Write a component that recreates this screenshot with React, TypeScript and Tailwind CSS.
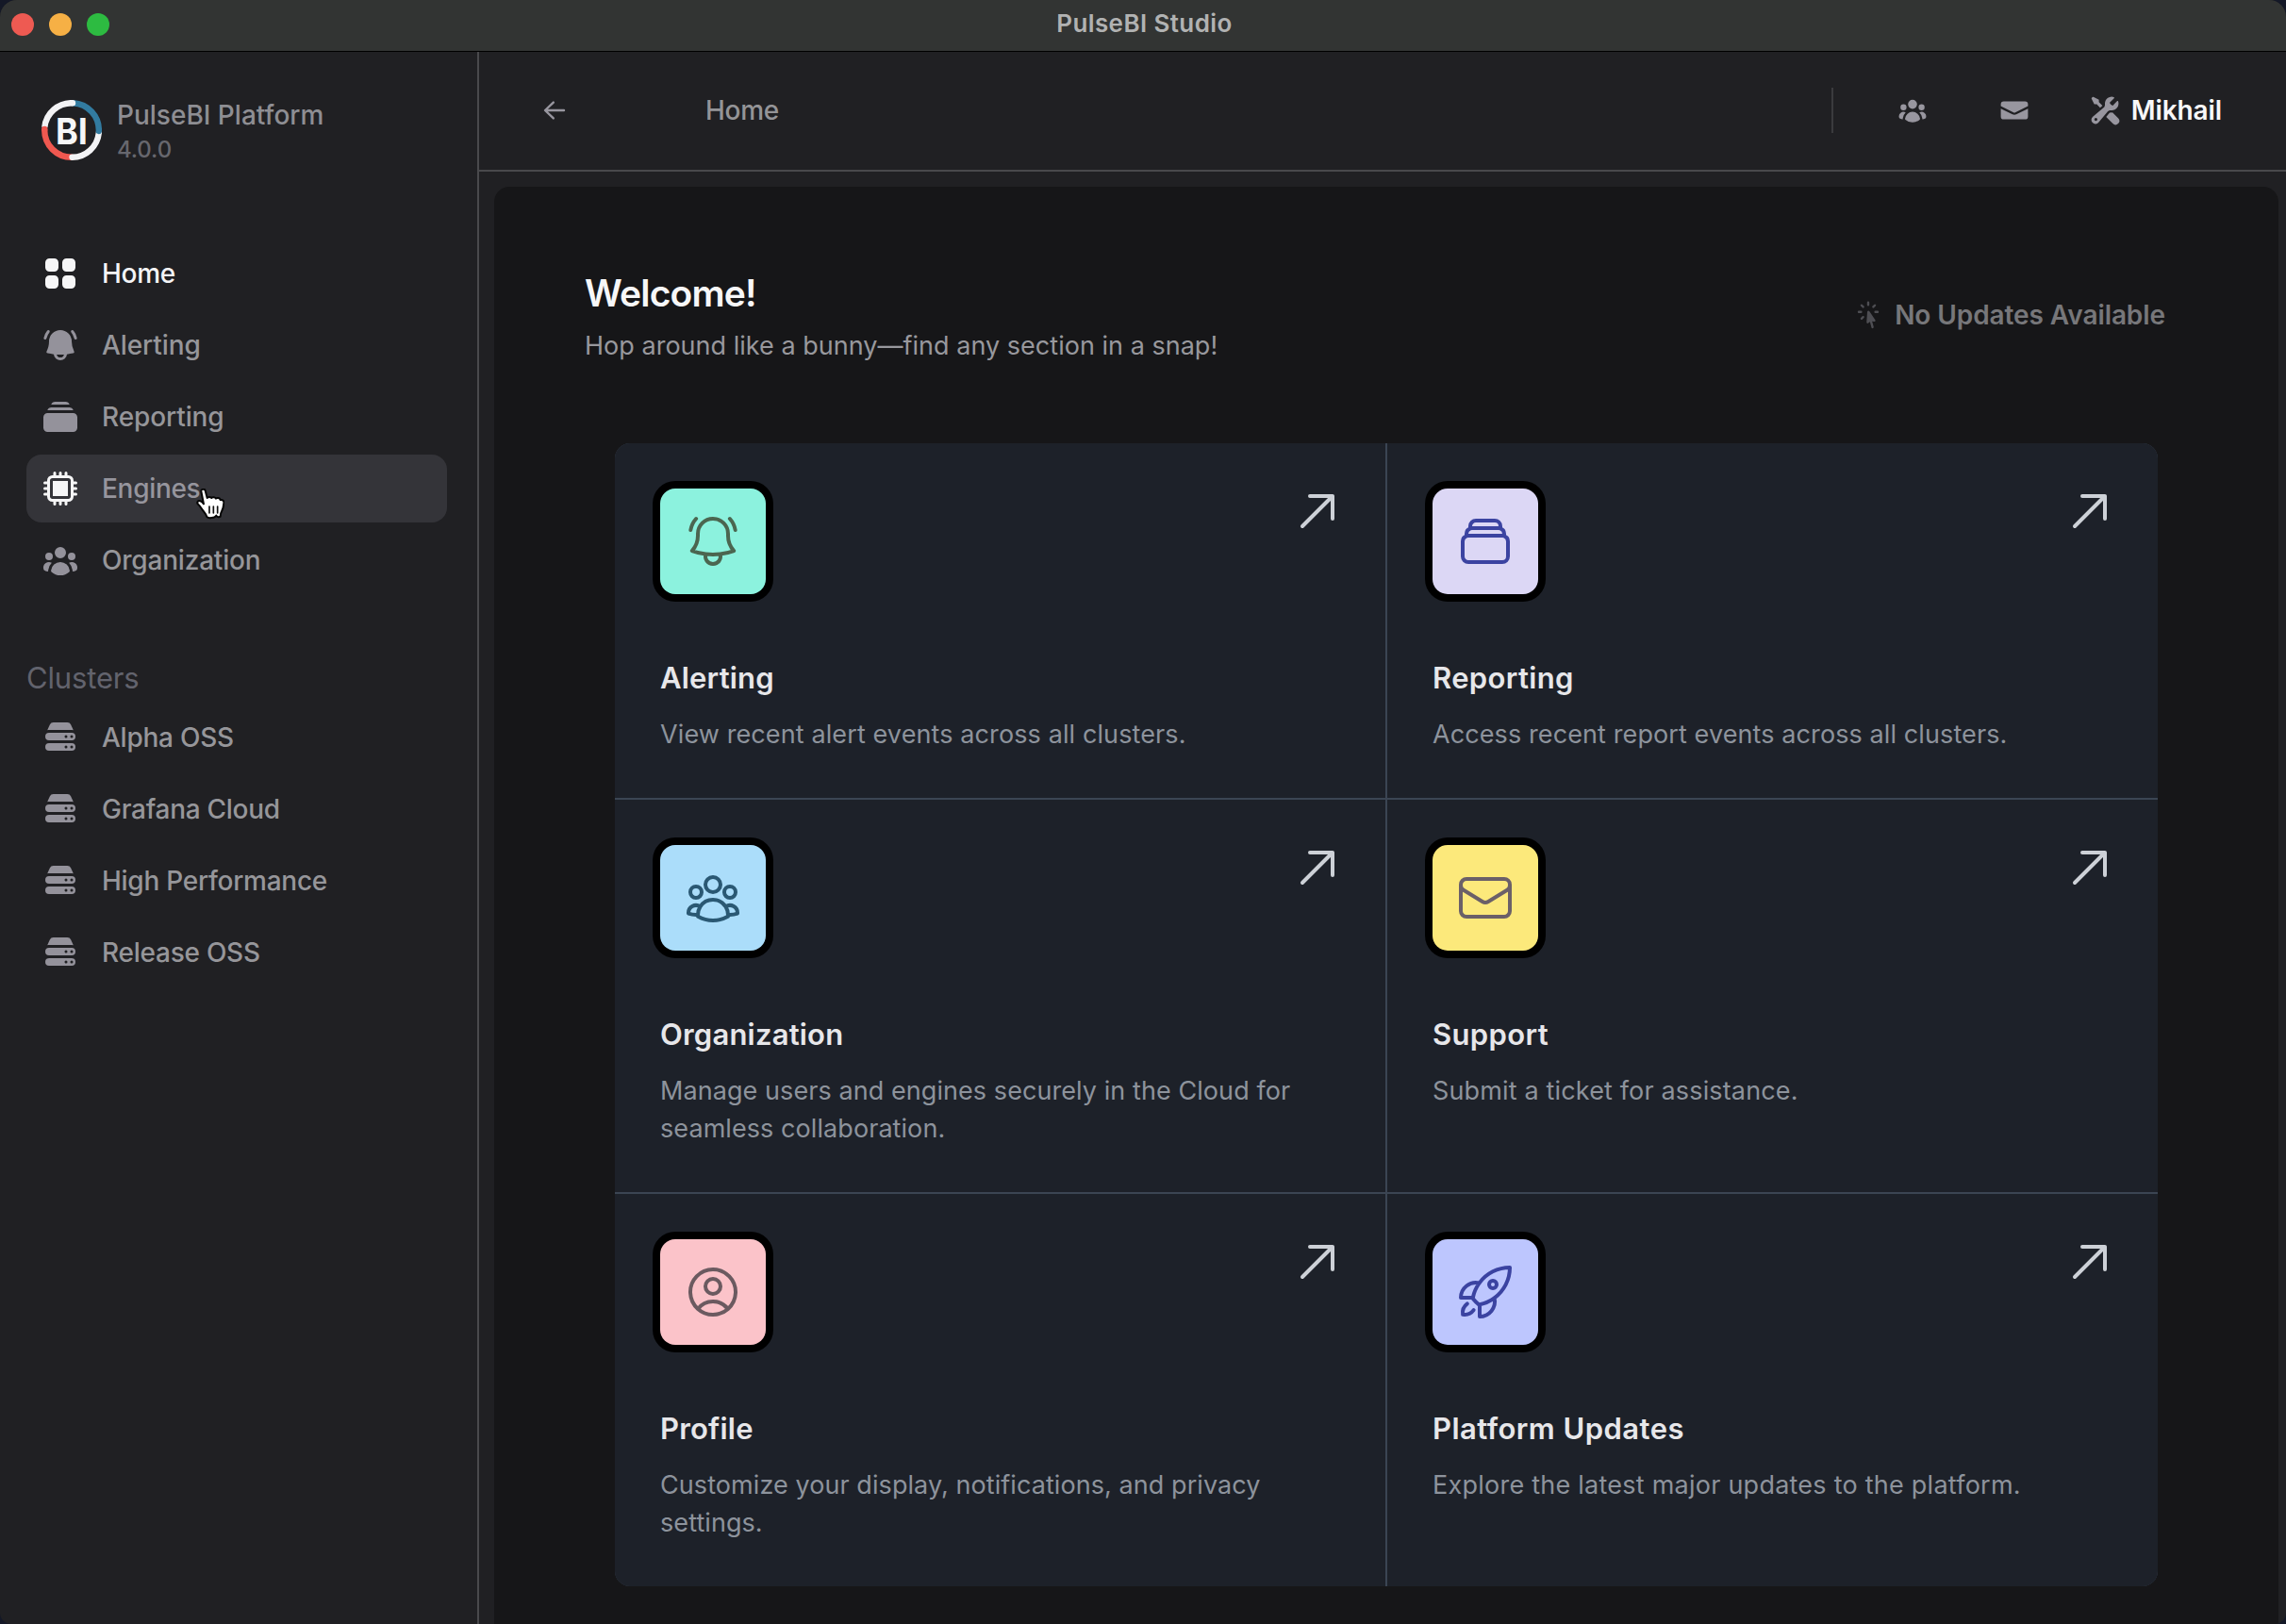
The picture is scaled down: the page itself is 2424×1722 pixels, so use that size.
import type { ReactNode } from "react";
import type { IconType } from "react-icons";
import {
  HiMiniArrowLeft,
  HiMiniBellAlert,
  HiMiniCpuChip,
  HiMiniCursorArrowRays,
  HiMiniEnvelope,
  HiMiniRectangleStack,
  HiMiniServerStack,
  HiMiniSquares2X2,
  HiMiniUserGroup,
  HiMiniWrenchScrewdriver,
  HiOutlineBellAlert,
  HiOutlineEnvelope,
  HiOutlineRectangleStack,
  HiOutlineRocketLaunch,
  HiOutlineUserCircle,
  HiOutlineUserGroup,
} from "react-icons/hi2";

type NavEntry = { label: string; icon: IconType; state?: "active" | "hover"; tracking?: string };

const sections: NavEntry[] = [
  { label: "Home", icon: HiMiniSquares2X2, state: "active", tracking: "tracking-[-0.3px]" },
  { label: "Alerting", icon: HiMiniBellAlert, tracking: "tracking-[-0.1px]" },
  { label: "Reporting", icon: HiMiniRectangleStack, tracking: "tracking-[-0.1px]" },
  { label: "Engines", icon: HiMiniCpuChip, state: "hover", tracking: "tracking-[-0.3px]" },
  { label: "Organization", icon: HiMiniUserGroup },
];

const clusters: NavEntry[] = [
  { label: "Alpha OSS", icon: HiMiniServerStack, tracking: "tracking-[-0.25px]" },
  { label: "Grafana Cloud", icon: HiMiniServerStack, tracking: "tracking-[-0.28px]" },
  { label: "High Performance", icon: HiMiniServerStack, tracking: "tracking-[-0.27px]" },
  { label: "Release OSS", icon: HiMiniServerStack, tracking: "tracking-[-0.25px]" },
];

type Card = { title: string; text: string; icon: IconType; tile: string; tracking?: string; textTracking?: string };

const cards: Card[] = [
  {
    title: "Alerting",
    text: "View recent alert events across all clusters.",
    icon: HiOutlineBellAlert,
    tile: "bg-[#8cf2de] text-[#4b6650]",
    textTracking: "tracking-[0.11px]",
  },
  {
    title: "Reporting",
    text: "Access recent report events across all clusters.",
    icon: HiOutlineRectangleStack,
    tile: "bg-[#dcd7f5] text-[#3b43a1]",
    tracking: "tracking-[0.35px]",
    textTracking: "tracking-[0.1px]",
  },
  {
    title: "Organization",
    text: "Manage users and engines securely in the Cloud for seamless collaboration.",
    icon: HiOutlineUserGroup,
    tile: "bg-[#abddfa] text-[#2a5873]",
  },
  {
    title: "Support",
    text: "Submit a ticket for assistance.",
    icon: HiOutlineEnvelope,
    tile: "bg-[#fce97b] text-[#6b6068]",
    tracking: "tracking-[0.35px]",
    textTracking: "tracking-[0.15px]",
  },
  {
    title: "Profile",
    text: "Customize your display, notifications, and privacy settings.",
    icon: HiOutlineUserCircle,
    tile: "bg-[#fbc3c9] text-[#6b5a60]",
  },
  {
    title: "Platform Updates",
    text: "Explore the latest major updates to the platform.",
    icon: HiOutlineRocketLaunch,
    tile: "bg-[#bdc6fe] text-[#3b43a1]",
    tracking: "tracking-[0.45px]",
    textTracking: "tracking-[0.24px]",
  },
];

function TitleBar() {
  return (
    <div className="relative flex h-[55px] shrink-0 items-center justify-center border-b border-black bg-[#323433] pb-1 pl-[3px]">
      <div className="absolute top-[14px] left-3 flex gap-4">
        <span className="size-6 rounded-full bg-[#ee5a52]" />
        <span className="size-6 rounded-full bg-[#f6b045]" />
        <span className="size-6 rounded-full bg-[#2dbb41]" />
      </div>
      <span className="text-[26px] leading-8 font-semibold tracking-[0.4px] text-[#b1b2b2]">PulseBI Studio</span>
    </div>
  );
}

function Logo() {
  return (
    <svg viewBox="0 0 64 64" className="size-16 shrink-0" fill="none" strokeWidth="6.4" strokeLinecap="round">
      <path d="M32 60.8A28.8 28.8 0 0 1 3.2 32" stroke="#ef5850" />
      <path d="M60.8 35A28.8 28.8 0 0 1 32.5 60.8" stroke="#f3f3f5" />
      <path d="M33.5 3.2A28.8 28.8 0 0 1 60.8 33" stroke="#327ba0" />
      <path d="M3.3 29A28.8 28.8 0 0 1 33 3.2" stroke="#f3f3f5" strokeLinecap="butt" />
      <circle cx="33" cy="3.2" r="3.2" fill="#f3f3f5" />
      <circle cx="3.3" cy="31" r="3.2" fill="#ef5850" />
      <text
        x="15"
        y="47"
        textLength="34"
        lengthAdjust="spacingAndGlyphs"
        fill="#f6f6f7"
        className="font-['Inter',sans-serif] text-[38px] font-bold"
      >
        BI
      </text>
    </svg>
  );
}

function HandCursor() {
  return (
    <svg viewBox="0 0 93 102" className="absolute top-[36px] left-[179px] h-[34px] w-[31px]" aria-hidden="true">
      <path
        d="M19 9c-1-7 11-10 13-2l6 23c2-4 12-4 14 0 3-4 12-3 14 2 4-4 13-2 14 4 8-1 12 3 11 10-1 12-2 19-7 27-3 5-4 9-4 16-4 3-10 2-13-3-3 6-9 7-15 7-6 1-12 0-15-3-2-8-9-15-14-22-5-7-8-13-13-17-7-6-1-14 6-11 4 1 7 4 11 9z"
        fill="#fff"
        stroke="#050505"
        strokeWidth="6"
        strokeLinejoin="round"
      />
      <path d="M45 57v21M58 57v21M71 57v21" stroke="#111" strokeWidth="5" strokeLinecap="round" />
    </svg>
  );
}

function NavItem({ label, icon: Icon, state, tracking = "tracking-[-0.2px]" }: NavEntry) {
  const tone =
    state === "active" ? "text-[#f4f4f6]" : state === "hover" ? "bg-[#343439] text-[#96959d]" : "text-[#96969a]";
  const iconTone = state ? "text-[#f6f6f7]" : "text-[#94929b]";
  return (
    <div className={`relative flex h-[72px] items-center gap-6 rounded-2xl px-4 ${tone}`}>
      <Icon className={`size-10 shrink-0 ${iconTone}`} />
      <span className={`text-[28px] leading-10 font-medium ${tracking}`}>{label}</span>
      {state === "hover" && <HandCursor />}
    </div>
  );
}

function Sidebar() {
  return (
    <aside className="flex w-[508px] shrink-0 flex-col border-r-2 border-[#49494c] pr-8 pl-7">
      <div className="mt-[51px] ml-4 flex h-16 items-center gap-4">
        <Logo />
        <div className="flex flex-col">
          <span className="text-[28px] leading-10 font-medium text-[#8e8e93]">PulseBI Platform</span>
          <span className="pt-px text-[24px] leading-8 font-medium tracking-[-0.1px] text-[#67676e]">4.0.0</span>
        </div>
      </div>
      <nav className="mt-[84px] flex flex-col gap-1">
        {sections.map((entry) => (
          <NavItem key={entry.label} {...entry} />
        ))}
      </nav>
      <h2 className="mt-16 text-[31px] leading-[50px] tracking-[-0.16px] text-[#62636d]">Clusters</h2>
      <nav className="mt-[2px] flex flex-col gap-1">
        {clusters.map((entry) => (
          <NavItem key={entry.label} {...entry} />
        ))}
      </nav>
    </aside>
  );
}

function HeaderBar() {
  return (
    <header className="flex h-[127px] shrink-0 items-center border-b-2 border-[#49494c] pr-[68px] pb-px pl-16 text-[#98969f]">
      <HiMiniArrowLeft className="size-8" />
      <span className="ml-36 text-[28px] leading-10 font-medium tracking-[-0.3px] text-[#949497]">Home</span>
      <div className="ml-auto flex items-center">
        <span className="mr-[68px] h-12 w-[2px] bg-[#3b3b3e]" />
        <HiMiniUserGroup className="mr-[76px] size-8" />
        <HiMiniEnvelope className="mr-16 size-8" />
        <HiMiniWrenchScrewdriver className="mr-3 size-8" />
        <span className="text-[28px] leading-10 font-semibold tracking-[-0.12px] text-[#f8f8f9]">Mikhail</span>
      </div>
    </header>
  );
}

function OpenArrow() {
  return (
    <svg viewBox="0 0 24 24" className="size-12 text-[#cdd1d7]" fill="none" stroke="currentColor" strokeWidth="2">
      <path d="M4 20 20 4M8 4h12v12" strokeLinecap="round" strokeLinejoin="round" />
    </svg>
  );
}

function ActionCard({ title, text, icon: Icon, tile, tracking = "tracking-[0.2px]", textTracking = "tracking-[0.07px]" }: Card) {
  return (
    <article className="bg-[#1d2129] px-12 pt-12 pb-[47px]">
      <div className="flex items-start justify-between">
        <span className={`rounded-2xl p-6 ring-8 ring-black ${tile}`}>
          <Icon className="size-16" />
        </span>
        <OpenArrow />
      </div>
      <h3 className={`mt-[65px] text-[31px] leading-[48px] font-semibold text-[#e7e7ea] ${tracking}`}>{title}</h3>
      <p className={`mt-4 text-[27px] leading-10 text-[#8d939c] ${textTracking}`}>{text}</p>
    </article>
  );
}

function Panel({ children }: { children: ReactNode }) {
  return (
    <main className="mt-4 mr-2 ml-4 flex-1 overflow-hidden rounded-t-2xl bg-[#161618] pr-[120px] pl-24">{children}</main>
  );
}

export default function App() {
  return (
    <div className="h-[1722px] w-[2424px] bg-[#141827]">
      <div className="flex h-full flex-col overflow-hidden rounded-t-[18px] rounded-b-[12px] bg-[#202023] font-['Inter','Liberation_Sans',sans-serif]">
        <TitleBar />
        <div className="flex min-h-0 flex-1">
          <Sidebar />
          <div className="flex min-w-0 flex-1 flex-col">
            <HeaderBar />
            <Panel>
              <div className="mt-[85px] flex items-center justify-between">
                <div>
                  <h1 className="text-[39px] leading-[56px] font-semibold tracking-[-0.82px] text-[#f7f7f8]">Welcome!</h1>
                  <p className="mt-2 text-[27px] leading-10 tracking-[0.02px] text-[#98989d]">
                    Hop around like a bunny—find any section in a snap!
                  </p>
                </div>
                <div className="flex items-center gap-3 pb-[2px] text-[#77777a]">
                  <HiMiniCursorArrowRays className="size-8 text-[#4e4e53]" />
                  <span className="text-[28px] leading-10 font-semibold tracking-[-0.08px]">No Updates Available</span>
                </div>
              </div>
              <section className="mt-[83px] mr-2 ml-8 grid grid-cols-2 gap-[2px] overflow-hidden rounded-2xl bg-[#3b4553]">
                {cards.map((card) => (
                  <ActionCard key={card.title} {...card} />
                ))}
              </section>
            </Panel>
          </div>
        </div>
      </div>
    </div>
  );
}
